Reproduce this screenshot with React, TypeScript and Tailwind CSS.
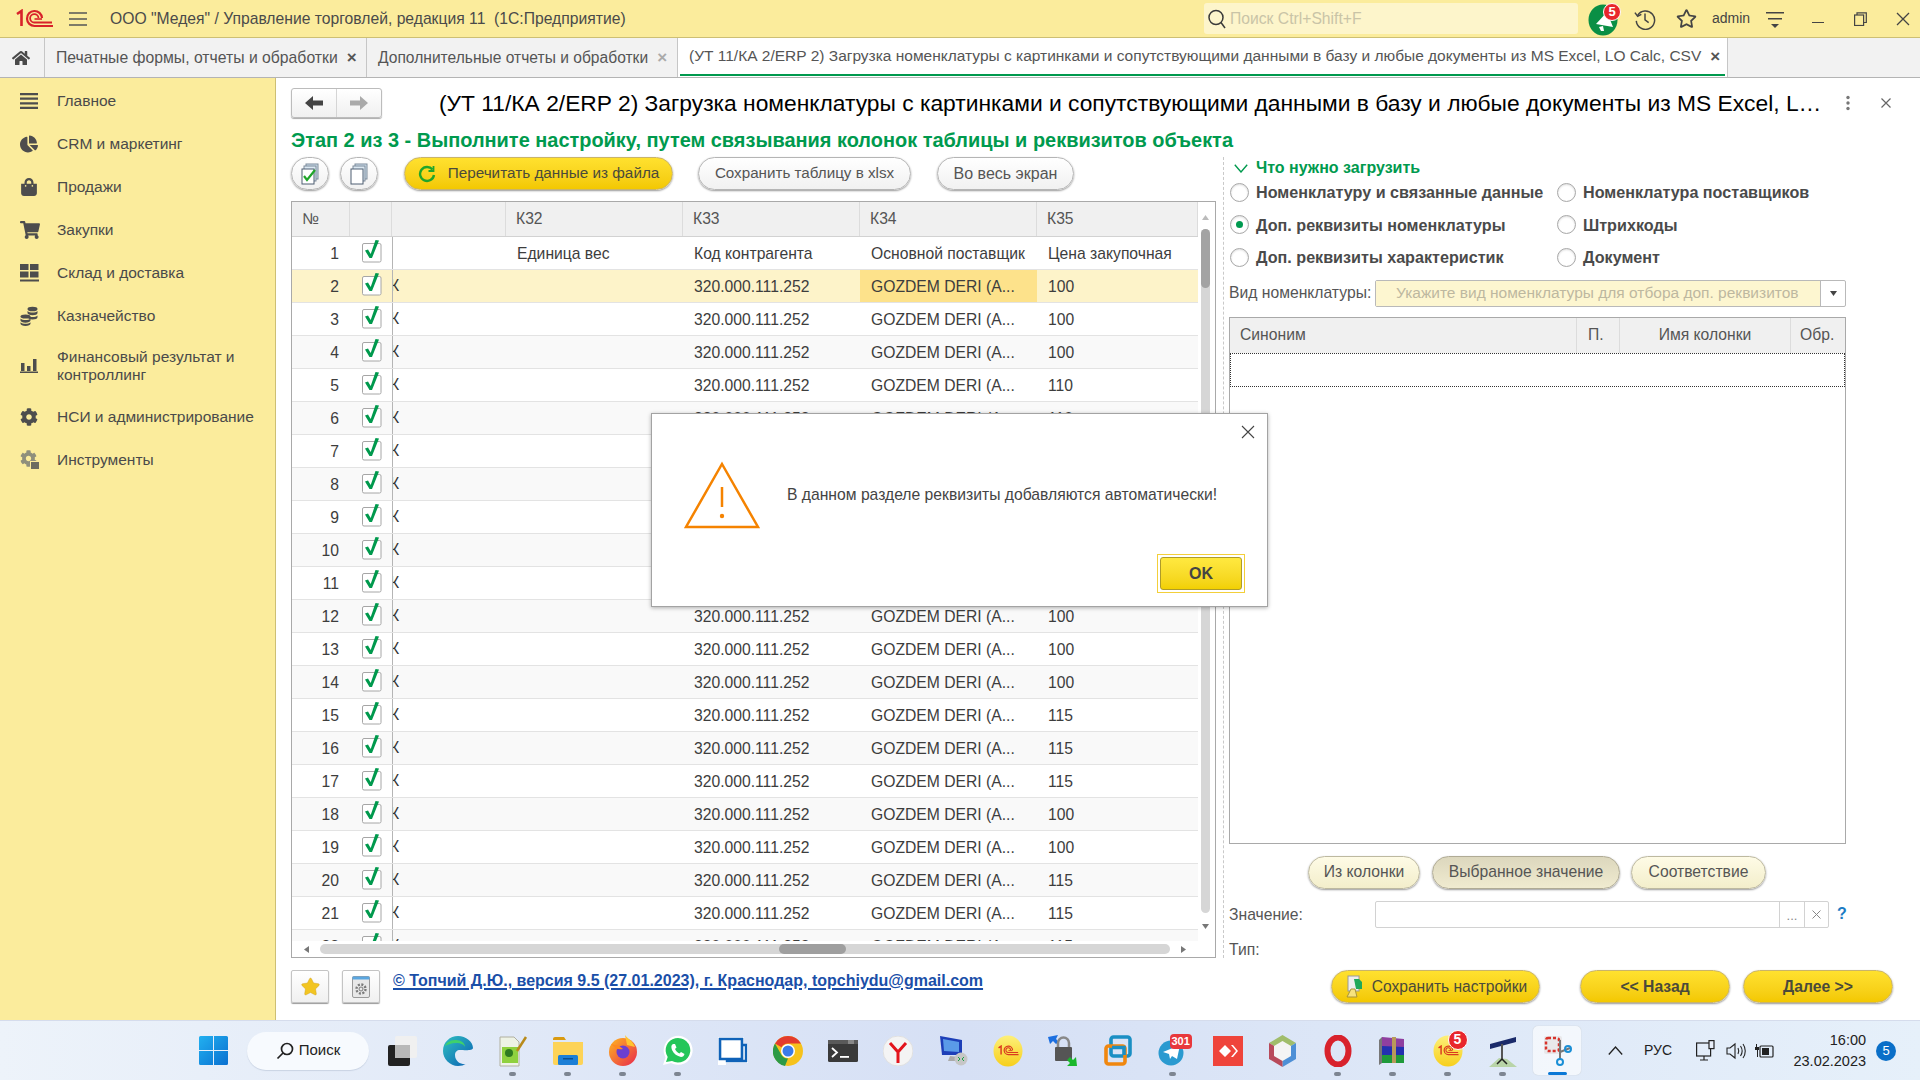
import React from "react";
import { FaChartPie, FaShoppingBag, FaShoppingCart, FaCog, FaHome, FaStar, FaRegStar } from "react-icons/fa";

const Logo1C = ({ w = 37, h = 20, color = "#d8222a" }: { w?: number; h?: number; color?: string }) => (
  <svg width={w} height={h} viewBox="0 0 37 20" fill="none">
    <path d="M1 5 L5.5 2 V17" stroke={color} strokeWidth="2.6" />
    <path d="M26 9 A7.5 7.5 0 1 0 18.5 17 H37" stroke={color} strokeWidth="2.2" />
    <path d="M22.5 9 A4.2 4.2 0 1 0 18.5 13.5 H36" stroke={color} strokeWidth="1.8" />
    <path d="M18.5 10 H26" stroke={color} strokeWidth="1.6" />
  </svg>
);

const MenuLines = () => (
  <svg width="18" height="14" viewBox="0 0 18 14" stroke="#555" strokeWidth="1.4">
    <path d="M0 1H18M0 7H18M0 13H18" />
  </svg>
);

const side: [React.ReactNode, string][] = [
  [<svg width="18" height="18" viewBox="0 0 18 18" fill="#4d4d4d"><path d="M0 1h18v2.2H0zM0 5.6h18v2.2H0zM0 10.2h18v2.2H0zM0 14.8h18V17H0z" /></svg>, "Главное"],
  [<FaChartPie size={18} color="#4d4d4d" />, "CRM и маркетинг"],
  [<FaShoppingBag size={18} color="#4d4d4d" />, "Продажи"],
  [<FaShoppingCart size={20} color="#4d4d4d" />, "Закупки"],
  [<svg width="19" height="18" viewBox="0 0 19 18" fill="#4d4d4d"><path d="M0 0h8.5v6H0zM10 0h8.5v6H10zM0 7.5h8.5v6H0zM10 7.5h8.5v6H10zM0 15.5h19V17.500H0z" /></svg>, "Склад и доставка"],
  [<svg width="18" height="20" viewBox="0 0 18 20" fill="#4d4d4d"><ellipse cx="12.500" cy="3" rx="5" ry="2.300" /><path d="M7.500 5v2c0 1.200 2.200 2.300 5 2.300s5-1 5-2.300V5c-1 1-3 1.500-5 1.500S8.500 6 7.500 5zM7.500 9.500v1.800c0 1.200 2.200 2.300 5 2.300s5-1 5-2.300V9.500c-1 1-3 1.500-5 1.500s-4-.5-5-1.500z" /><ellipse cx="5.500" cy="10.500" rx="5" ry="2.100" /><path d="M.5 12.500v2c0 1.200 2.200 2.200 5 2.200s5-1 5-2.200v-2c-1 1-3 1.500-5 1.500s-4-.5-5-1.500zM.5 16.200v1.500c0 1.200 2.200 2.200 5 2.200s5-1 5-2.200v-1.500c-1 1-3 1.500-5 1.500s-4-.5-5-1.500z" /></svg>, "Казначейство"],
  [<svg width="18" height="14" viewBox="0 0 18 14" fill="#4d4d4d"><path d="M1 4h3.500v8H1zM7 7h3.500v5H7zM13 0h3.500v12H13zM0 12.600h18V14H0z" /></svg>, "Финансовый результат и контроллинг"],
  [<FaCog size={18} color="#4d4d4d" />, "НСИ и администрирование"],
  [<span className="relative inline-block w-[20px] h-[20px]"><FaCog size={17} color="#8f8f7c" /><span className="absolute right-0 bottom-0 w-[10px] h-[9px] bg-[#6c6c60] border border-[#fbec9c]" /></span>, "Инструменты"],
];

const Check = () => (
  <svg width="21" height="24" viewBox="0 0 21 24" fill="none" className="-mt-[5px]">
    <rect x="1.500" y="4.500" width="18.500" height="18.500" rx="1.500" fill="#fff" stroke="#a6a6a6" />
    <path d="M4 11.500 L7 10.500 L9.700 15 L14.500 1 L18 1.500 L11 19 L8.500 19 Z" fill="#00994d" />
  </svg>
);

const vals: Record<number, string> = { 2: "100", 3: "100", 4: "100", 5: "110", 6: "110", 7: "110", 8: "110", 9: "110", 10: "110", 11: "110", 12: "100", 13: "100", 14: "100", 15: "115", 16: "115", 17: "115", 18: "100", 19: "100", 20: "115", 21: "115", 22: "115" };
const rows = Array.from({ length: 22 }, (_, i) => i + 1);

const Row = ({ n }: { n: number }) => {
  const sel = n === 2;
  const first = n === 1;
  return (
    <div className={`flex h-[33px] shrink-0 items-center border-b border-[#e3e3e3] text-[15.7px] text-[#3d3d3d] whitespace-nowrap ${sel ? "bg-[#fdf3c9]" : n % 2 === 0 ? "bg-[#f9f9f9]" : "bg-white"}`}>
      <div className="w-[58px] text-right pr-[11px] pt-[1px]">{n}</div>
      <div className="w-[42px] flex justify-center"><Check /></div>
      <div className="w-[114px] h-full border-l border-[#b5b5b5] overflow-hidden flex items-center">
        {!first && <span className="-ml-[3px] text-[#333]">К</span>}
      </div>
      <div className="w-[177px] pl-[11px] pt-[1px]">{first ? "Единица вес" : ""}</div>
      <div className="w-[177px] pl-[11px] pt-[1px]">{first ? "Код контрагента" : "320.000.111.252"}</div>
      <div className={`w-[177px] pl-[11px] pt-[1px] h-full flex items-center ${sel ? "bg-[#fde28b]" : ""}`}>{first ? "Основной поставщик" : "GOZDEM DERI (A..."}</div>
      <div className="w-[161px] pl-[11px] pt-[1px]">{first ? "Цена закупочная" : vals[n]}</div>
    </div>
  );
};

const Hd = ({ w, children }: { w: string; children?: React.ReactNode }) => (
  <div className={`${w} h-full flex items-center pl-[10px] bg-[#f0f0f0] border-r border-[#dcdcdc] text-[15.7px] text-[#555]`}>{children}</div>
);

const Radio = ({ on, label }: { on?: boolean; label: string }) => (
  <div className="flex items-center h-[32.500px]">
    <span className="w-[19px] h-[19px] rounded-full border border-[#a8a8a8] bg-white flex items-center justify-center shadow-[inset_0_1px_2px_#ddd]">
      {on && <span className="w-[7px] h-[7px] rounded-full bg-[#009a50]" />}
    </span>
    <span className="ml-[7px] text-[16.15px] font-bold text-[#4a4a4a] whitespace-nowrap">{label}</span>
  </div>
);

const Tb = ({ c, dot, active, children }: { c?: string; dot?: boolean; active?: boolean; children: React.ReactNode }) => (
  <div className={`relative w-[55px] h-[60px] flex items-center justify-center ${c ?? ""}`}>
    {active && <span className="absolute left-[3px] right-[4px] top-[5px] bottom-[6px] rounded-[5px] bg-white/60 shadow-[0_0_1px_#bbb]" />}
    <span className="relative flex items-center justify-center">{children}</span>
    {dot && <span className="absolute bottom-[5px] left-[24px] w-[7px] h-[4px] rounded-full bg-[#7d8591]" />}
    {active && <span className="absolute bottom-[6px] left-[18px] w-[19px] h-[3px] rounded-full bg-[#0a78d6]" />}
  </div>
);

const Coin1C = () => (
  <svg width="30" height="32" viewBox="0 0 30 32">
    <defs><linearGradient id="cg" x1="0" y1="0" x2="0" y2="1"><stop offset="0" stopColor="#fdf07a" /><stop offset="1" stopColor="#f7cf1c" /></linearGradient></defs>
    <ellipse cx="15" cy="16" rx="14.500" ry="15.500" fill="url(#cg)" />
    <g transform="translate(5 10) scale(.56)"><Logo1C color="#d93a1f" /></g>
  </svg>
);

const Btn = ({ cls, t = "text-[15.7px]", children }: { cls: string; t?: string; children: React.ReactNode }) => (
  <div className={`h-[33px] rounded-[17px] border flex items-center justify-center whitespace-nowrap shadow-[0_1px_2px_#999] ${t} ${cls}`}>{children}</div>
);
const yel = "bg-gradient-to-b from-[#ffe12e] to-[#f3c800] border-[#c9b46a] text-[#4a4a3a]";
const gry = "bg-gradient-to-b from-white to-[#f1f1f1] border-[#b5b5b5] text-[#555]";
const bei = "bg-gradient-to-b from-[#fefbe6] to-[#f3eecb] border-[#bdb9a0] text-[#555]";

export default function App() {
  return (
    <div className="w-[1920px] h-[1080px] relative overflow-hidden flex flex-col bg-white font-['Liberation_Sans',Arial,sans-serif]">
      {/* Title bar */}
      <div className="h-[38px] shrink-0 flex items-center bg-[#fbec9c] border-b border-[#cdbf74]">
        <div className="ml-[16px] w-[37px] flex"><Logo1C /></div>
        <div className="ml-[16px] flex"><MenuLines /></div>
        <div className="ml-[23px] w-[1094px] text-[15.7px] text-[#4a4a4a] whitespace-nowrap">ООО "Медея" / Управление торговлей, редакция 11&nbsp; (1С:Предприятие)</div>
        <div className="w-[374px] h-[31px] rounded-[3px] bg-[#fdf5cb] flex items-center pl-[3px]">
          <svg width="20" height="22" viewBox="0 0 20 22" fill="none" stroke="#3a3a3a" strokeWidth="1.500"><circle cx="9" cy="9.500" r="7" /><path d="M14 14.500L18 20" /></svg>
          <span className="ml-[3px] text-[15.7px] text-[#c9c4a7]">Поиск Ctrl+Shift+F</span>
        </div>
        <div className="relative ml-[9px] w-[34px] h-[34px] flex items-center justify-center">
          <svg width="32" height="34" viewBox="0 0 32 34">
            <ellipse cx="15" cy="18" rx="14.500" ry="15.500" fill="#0a8f45" />
            <path d="M8 22 L19 10 L25 25 Z" fill="#fff" /><path d="M11 25 L15 24 L16 29 L13 29 Z" fill="#fff" />
          </svg>
          <span className="absolute left-[16px] top-[1px] w-[18px] h-[18px] rounded-full bg-[#e8262c] border border-white text-white text-[13px] font-bold flex items-center justify-center">5</span>
        </div>
        <svg className="ml-[13px]" width="22" height="22" viewBox="0 0 24 24" fill="none" stroke="#444" strokeWidth="1.600"><path d="M4 8a10 10 0 1 1-1.500 6" /><path d="M1 5l3 4 4-2" /><path d="M12 6v7l4 3" /></svg>
        <span className="ml-[20px] flex"><FaRegStar size={21} color="#444" /></span>
        <span className="ml-[15px] text-[14px] text-[#444]">admin</span>
        <svg className="ml-[15px]" width="20" height="18" viewBox="0 0 20 18" fill="#444"><path d="M1 2h18v1.400H1zM3 8h14v1.400H3zM6 14h8l-4 4z" /></svg>
        <span className="ml-[27px] w-[12px] h-[1.500px] mt-[8px] bg-[#444]" />
        <svg className="ml-[30px]" width="13" height="14" viewBox="0 0 13 14" fill="none" stroke="#444" strokeWidth="1.200"><rect x=".6" y="3" width="9" height="10.500" /><path d="M3 3V.8h9.300V10.500H9.600" /></svg>
        <svg className="ml-[29px]" width="14" height="14" viewBox="0 0 14 14" stroke="#444" strokeWidth="1.300"><path d="M1 1L13 13M13 1L1 13" /></svg>
      </div>

      {/* Tabs */}
      <div className="h-[40px] shrink-0 flex bg-[#f2f2f2] border-b border-[#b4b4b4] text-[#555]">
        <div className="w-[45px] border-r border-[#c6c6c6] flex items-center justify-center pr-[3px]"><FaHome size={18} color="#4a4a4a" /></div>
        <div className="w-[322px] border-r border-[#c6c6c6] flex items-center pl-[11px] whitespace-nowrap text-[15.75px]">
          Печатные формы, отчеты и обработки<span className="ml-[9px] text-[17px] font-bold text-[#555] leading-none">×</span>
        </div>
        <div className="w-[311px] border-r border-[#c6c6c6] flex items-center pl-[11px] whitespace-nowrap text-[15.6px]">
          Дополнительные отчеты и обработки<span className="ml-[9px] text-[17px] font-bold text-[#aaa] leading-none">×</span>
        </div>
        <div className="w-[1050px] bg-white border-r border-[#c6c6c6] px-[2px] flex">
          <div className="flex-1 flex items-center pl-[9px] border-b-[2.500px] border-[#00994d] mb-[1px] whitespace-nowrap text-[15.5px]">
            (УТ 11/КА 2/ERP 2) Загрузка номенклатуры с картинками и сопутствующими данными в базу и любые документы из MS Excel, LO Calc, CSV
            <span className="ml-[9px] text-[17px] font-bold text-[#555] leading-none">×</span>
          </div>
        </div>
      </div>

      <div className="flex-1 min-h-0 flex">
        {/* Sidebar */}
        <div className="w-[276px] shrink-0 bg-[#fbec9c] border-r border-[#cdbf74] pt-[1px] text-[15.5px] text-[#4a4a4a]">
          {side.map(([ic, t], i) => (
            <div key={i} className={`flex items-center ${i === 6 ? "h-[58px]" : "h-[43px]"}`}>
              <div className="w-[57px] pl-[20px] flex items-center">{ic}</div>
              <div className="w-[215px] leading-[18px]">{t}</div>
            </div>
          ))}
        </div>

        {/* Main */}
        <div className="flex-1 min-w-0 flex flex-col pl-[15px]">
          <div className="flex items-center h-[30px] mt-[10px]">
            <div className="w-[91px] h-[30px] flex rounded-[3px] border border-[#bcbcbc] bg-gradient-to-b from-white to-[#f0f0f0] shadow-[0_1px_1px_#aaa]">
              <div className="w-[45px] border-r border-[#d5d5d5] flex items-center justify-center">
                <svg width="18" height="14" viewBox="0 0 18 14" fill="#444"><path d="M0 7L8 0V4.500H18V9.500H8V14Z" /></svg>
              </div>
              <div className="flex-1 flex items-center justify-center">
                <svg width="18" height="14" viewBox="0 0 18 14" fill="#aaa"><path d="M18 7L10 0V4.500H0V9.500H10V14Z" /></svg>
              </div>
            </div>
            <div className="ml-[57px] w-[1386px] truncate text-[22.8px] text-black">
              (УТ 11/КА 2/ERP 2) Загрузка номенклатуры с картинками и сопутствующими данными в базу и любые документы из MS Excel, LO Calc, CSV
            </div>
            <svg className="ml-[20px]" width="6" height="16" viewBox="0 0 6 16" fill="#777"><circle cx="3" cy="2.500" r="1.700" /><circle cx="3" cy="8" r="1.700" /><circle cx="3" cy="13.500" r="1.700" /></svg>
            <svg className="ml-[30px]" width="10" height="10" viewBox="0 0 10 10" stroke="#666" strokeWidth="1.200"><path d="M.5.5L9.500 9.500M9.500.5L.5 9.500" /></svg>
          </div>
          <div className="h-[23px] mt-[11px] mb-[5px] flex items-center text-[19.95px] font-bold text-[#009a4e] whitespace-nowrap">
            Этап 2 из 3 - Выполните настройку, путем связывания колонок таблицы и реквизитов объекта
          </div>

          <div className="flex">
            {/* Left column */}
            <div className="w-[925px] shrink-0 flex flex-col h-[801px]">
              <div className="flex items-center h-[33px] shrink-0">
                <div className="w-[38px] h-[33px] rounded-full border border-[#b5b5b5] bg-gradient-to-b from-white to-[#f1f1f1] shadow-[0_1px_2px_#999] flex items-center justify-center">
                  <svg width="18" height="22" viewBox="0 0 18 22"><rect x="5" y="1" width="12" height="15" fill="#cfe1ee" stroke="#7c8a99" /><rect x="3" y="3" width="12" height="15" fill="#dbe8f2" stroke="#7c8a99" /><rect x="1" y="6" width="12" height="15" fill="#fff" stroke="#4e5f72" /><path d="M3 13l3 4 8-10" fill="none" stroke="#1fa52a" strokeWidth="2.200" /></svg>
                </div>
                <div className="ml-[11px] w-[38px] h-[33px] rounded-full border border-[#b5b5b5] bg-gradient-to-b from-white to-[#f1f1f1] shadow-[0_1px_2px_#999] flex items-center justify-center">
                  <svg width="18" height="22" viewBox="0 0 18 22"><rect x="5" y="1" width="12" height="15" fill="#cfe1ee" stroke="#7c8a99" /><rect x="3" y="3" width="12" height="15" fill="#dbe8f2" stroke="#7c8a99" /><rect x="1" y="6" width="12" height="15" fill="#fff" stroke="#4e5f72" /></svg>
                </div>
                <Btn t="text-[15.3px]" cls={`ml-[26px] w-[269px] ${yel}`}>
                  <svg width="18" height="18" viewBox="0 0 18 18" fill="none" stroke="#1fa52a" strokeWidth="2.400" className="mr-[12px]"><path d="M14.500 4.500A7 7 0 1 0 16 10" /><path d="M15.500 1v5h-5" strokeWidth="1.800" /></svg>
                  Перечитать данные из файла
                </Btn>
                <Btn t="text-[15.2px]" cls={`ml-[25px] w-[213px] ${gry}`}>Сохранить таблицу в xlsx</Btn>
                <Btn t="text-[16px]" cls={`ml-[26px] w-[137px] ${gry}`}>Во весь экран</Btn>
              </div>

              {/* Table */}
              <div className="mt-[11px] flex-1 min-h-0 flex flex-col border border-[#a9a9a9] bg-white">
                <div className="flex-1 min-h-0 flex">
                  <div className="w-[906px] flex flex-col">
                    <div className="h-[35px] shrink-0 flex border-b border-[#d2d2d2]">
                      <Hd w="w-[58px]">№</Hd>
                      <Hd w="w-[42px]" />
                      <Hd w="w-[114px]" />
                      <Hd w="w-[177px]">К32</Hd>
                      <Hd w="w-[177px]">К33</Hd>
                      <Hd w="w-[177px]">К34</Hd>
                      <Hd w="w-[161px]">К35</Hd>
                    </div>
                    <div className="flex-1 min-h-0 overflow-hidden">
                      {rows.map((n) => <Row key={n} n={n} />)}
                    </div>
                  </div>
                  <div className="w-[17px] flex flex-col items-center pr-[2px]">
                    <svg className="mt-[13px]" width="7" height="5" viewBox="0 0 7 5" fill="#bbb"><path d="M3.500 0L7 5H0Z" /></svg>
                    <div className="mt-[9px] w-[9px] h-[684px] rounded-[5px] bg-[#d6d6d6]">
                      <div className="w-[9px] h-[59px] rounded-[5px] bg-[#a3a3a3]" />
                    </div>
                    <svg className="mt-[11px]" width="7" height="5" viewBox="0 0 7 5" fill="#777"><path d="M3.500 5L7 0H0Z" /></svg>
                  </div>
                </div>
                <div className="h-[16px] shrink-0 flex items-center">
                  <svg className="ml-[12px]" width="5" height="7" viewBox="0 0 5 7" fill="#777"><path d="M0 3.500L5 0V7Z" /></svg>
                  <div className="ml-[11px] w-[850px] h-[10px] rounded-[5px] bg-[#d6d6d6] flex">
                    <div className="ml-[459px] w-[67px] h-[10px] rounded-[5px] bg-[#9f9f9f]" />
                  </div>
                  <svg className="ml-[11px]" width="5" height="7" viewBox="0 0 5 7" fill="#777"><path d="M5 3.500L0 0V7Z" /></svg>
                </div>
              </div>
            </div>

            {/* Right column */}
            <div className="ml-[7px] w-[697px] h-[801px] border-l border-dashed border-[#c9c9c9] pl-[5px] flex flex-col">
              <div className="h-[22px] shrink-0 flex items-center pl-[5px] text-[16px] font-bold text-[#009a4e]">
                <svg width="14" height="9" viewBox="0 0 14 9" fill="none" stroke="#009a4e" strokeWidth="1.400"><path d="M.8.8L7 8L13.200.8" /></svg>
                <span className="ml-[8px]">Что нужно загрузить</span>
              </div>
              <div className="grid grid-cols-[327px_1fr] pl-[1px] -mt-[3px] shrink-0">
                <Radio label="Номенклатуру и связанные данные" />
                <Radio label="Номенклатура поставщиков" />
                <Radio on label="Доп. реквизиты номенклатуры" />
                <Radio label="Штрихкоды" />
                <Radio label="Доп. реквизиты характеристик" />
                <Radio label="Документ" />
              </div>
              <div className="mt-[6px] flex items-center h-[27px] shrink-0">
                <div className="w-[146px] text-[15.7px] text-[#555] whitespace-nowrap">Вид номенклатуры:</div>
                <div className="w-[471px] h-[27px] flex rounded-[2px] border border-[#b9b9b9]">
                  <div className="w-[444px] h-full bg-[#fdf6d0] flex items-center pl-[20px] text-[15.5px] text-[#bdb8a0] whitespace-nowrap overflow-hidden">Укажите вид номенклатуры для отбора доп. реквизитов</div>
                  <div className="flex-1 border-l border-[#b9b9b9] flex items-center justify-center">
                    <svg width="7" height="5" viewBox="0 0 7 5" fill="#444"><path d="M0 0H7L3.500 5Z" /></svg>
                  </div>
                </div>
              </div>
              <div className="mt-[10px] w-[617px] h-[527px] shrink-0 border border-[#a9a9a9] flex flex-col">
                <div className="h-[35px] shrink-0 flex bg-[#f0f0f0] text-[15.7px] text-[#555]">
                  <div className="w-[347px] pl-[10px] flex items-center border-r border-[#dcdcdc]">Синоним</div>
                  <div className="w-[43px] pl-[11px] flex items-center border-r border-[#dcdcdc]">П.</div>
                  <div className="w-[171px] flex items-center justify-center border-r border-[#dcdcdc]">Имя колонки</div>
                  <div className="flex-1 pl-[9px] flex items-center">Обр.</div>
                </div>
                <div className="h-[34px] shrink-0 border border-dotted border-[#333]" />
              </div>
              <div className="mt-[12px] flex pl-[79px] shrink-0">
                <Btn cls={`w-[112px] ${bei}`}>Из колонки</Btn>
                <Btn cls="ml-[12px] w-[188px] bg-gradient-to-b from-[#dcd7bd] to-[#f0ebd0] border-[#b0ab95] text-[#555]">Выбранное значение</Btn>
                <Btn cls={`ml-[11px] w-[135px] ${bei}`}>Соответствие</Btn>
              </div>
              <div className="mt-[12px] flex items-center h-[27px] shrink-0">
                <div className="w-[146px] text-[15.7px] text-[#555] pt-[2px]">Значение:</div>
                <div className="w-[454px] h-[27px] flex rounded-[2px] border border-[#d2d2d2]">
                  <div className="w-[403px]" />
                  <div className="w-[25px] border-l border-[#d2d2d2] text-[13px] text-[#888] flex items-center justify-center pt-[4px]">...</div>
                  <div className="flex-1 border-l border-[#d2d2d2] flex items-center justify-center">
                    <svg width="9" height="9" viewBox="0 0 9 9" stroke="#888" strokeWidth="1"><path d="M.5.5L8.500 8.500M8.500.5L.5 8.500" /></svg>
                  </div>
                </div>
                <div className="ml-[8px] text-[16px] font-bold text-[#1c7cc4]">?</div>
              </div>
              <div className="mt-[10px] text-[15.7px] text-[#555]">Тип:</div>
            </div>
          </div>

          {/* Bottom row */}
          <div className="mt-[12px] flex items-center h-[33px]">
            <div className="w-[38px] h-[33px] rounded-[2px] border border-[#c4c4c4] bg-gradient-to-b from-white to-[#f0f0f0] shadow-[0_1px_1px_#999] flex items-center justify-center">
              <FaStar size={19} color="#f2c522" stroke="#c99a17" strokeWidth={12} />
            </div>
            <div className="ml-[13px] w-[38px] h-[33px] rounded-[2px] border border-[#c4c4c4] bg-gradient-to-b from-white to-[#f0f0f0] shadow-[0_1px_1px_#999] flex items-center justify-center">
              <svg width="18" height="22" viewBox="0 0 18 22"><rect x=".5" y=".5" width="17" height="21" rx="1.500" fill="#e8e8e8" stroke="#9a9a9a" /><rect x=".5" y=".5" width="17" height="3" fill="#5aa6e0" /><circle cx="9" cy="13" r="4.500" fill="none" stroke="#7a7a7a" strokeWidth="2.400" strokeDasharray="2 1.500" /><circle cx="9" cy="13" r="2" fill="none" stroke="#7a7a7a" /></svg>
            </div>
            <a className="ml-[13px] w-[588px] text-[16px] font-bold text-[#1a4fa8] underline decoration-[2px] underline-offset-[2px] whitespace-nowrap -mt-[12px]">© Топчий Д.Ю., версия 9.5 (27.01.2023), г. Краснодар, topchiydu@gmail.com</a>
            <Btn t="text-[15.6px]" cls={`ml-[350px] w-[209px] ${yel}`}>
              <svg width="20" height="24" viewBox="0 0 20 24" className="mr-[8px]"><rect x="4" y="1" width="11" height="15" fill="#eee" stroke="#999" /><path d="M10 4h5l3 3v7h-6z" fill="#1fa85a" /><path d="M7 14l-4 8h10l-2-8z" fill="#f6e27e" stroke="#a8933a" /></svg>
              Сохранить настройки
            </Btn>
            <Btn cls={`ml-[40px] w-[150px] font-bold ${yel}`}>&lt;&lt; Назад</Btn>
            <Btn cls={`ml-[13px] w-[150px] font-bold ${yel}`}>Далее &gt;&gt;</Btn>
          </div>
        </div>
      </div>

      {/* Taskbar */}
      <div className="h-[60px] shrink-0 flex items-center pl-[199px] bg-gradient-to-r from-[#edf3fa] via-[#d6e0f5] to-[#e6f0fa] border-t border-[#d5dcec]">
        <svg width="29" height="29" viewBox="0 0 29 29"><defs><linearGradient id="wn" x1="0" y1="0" x2="1" y2="1"><stop offset="0" stopColor="#22b0f0" /><stop offset="1" stopColor="#0a70d0" /></linearGradient></defs><path d="M0 1.500A1.500 1.500 0 0 1 1.500 0H14V14H0zM15 0h12.500A1.500 1.500 0 0 1 29 1.500V14H15zM0 15H14V29H1.500A1.500 1.500 0 0 1 0 27.500zM15 15H29V27.500A1.500 1.500 0 0 1 27.500 29H15z" fill="url(#wn)" /></svg>
        <div className="ml-[19px] w-[122px] h-[38px] rounded-[19px] bg-[#f7fafe] shadow-[0_1px_1px_#c9d3e3] flex items-center justify-center text-[15px] text-[#222]">
          <svg width="18" height="18" viewBox="0 0 18 18" fill="none" stroke="#222" strokeWidth="1.700"><circle cx="11" cy="7" r="5.500" /><path d="M7 11L1.500 16.500" /></svg>
          <span className="ml-[5px]">Поиск</span>
        </div>
        <div className="ml-[6px] flex">
          <Tb><svg width="31" height="30" viewBox="0 0 31 30"><rect x="1" y="9" width="22" height="21" rx="2" fill="#222" /><rect x="8" y="0" width="22" height="22" rx="2" fill="#f0f0f0" /><rect x="8" y="9" width="15" height="13" fill="#b8b8b8" /></svg></Tb>
          <Tb><svg width="30" height="30" viewBox="0 0 30 30"><defs><linearGradient id="ed" x1="0" y1="0" x2="1" y2="1"><stop offset="0" stopColor="#2fc0c0" /><stop offset="1" stopColor="#0a5fb4" /></linearGradient></defs><path d="M15 0C7 0 0 6 0 15c0 8 7 15 15 15 3 0 6-1 8-2-4 1-11-2-11-9 0-3 2-5 5-5 4 0 13 1 13-2C30 6 23 0 15 0z" fill="url(#ed)" /><path d="M2 10c2-5 7-6 11-6 5 0 9 3 9 7-1-2-4-4-9-4-5 0-9 2-11 3z" fill="#3fd06c" /></svg></Tb>
          <Tb dot><svg width="30" height="32" viewBox="0 0 30 32"><path d="M2 2h14l5 5v24H2z" fill="#eef3e6" stroke="#b0b0a0" /><rect x="4" y="12" width="16" height="16" fill="#8fd13f" /><circle cx="11" cy="18" r="4" fill="#2e7a20" /><path d="M19 16L28 2" stroke="#b88a1a" strokeWidth="2.500" /></svg></Tb>
          <Tb dot><svg width="30" height="28" viewBox="0 0 30 28"><path d="M0 2a2 2 0 0 1 2-2h9l2 3H0z" fill="#d99a10" /><path d="M0 5h30v21a2 2 0 0 1-2 2H2a2 2 0 0 1-2-2z" fill="#fdd357" /><rect x="5" y="18" width="20" height="10" rx="1.500" fill="#1c7fd6" /><rect x="10" y="21" width="10" height="1.500" fill="#0a4f90" /></svg></Tb>
          <Tb dot><svg width="30" height="31" viewBox="0 0 30 31"><defs><linearGradient id="ff" x1="0" y1="0" x2="1" y2="1"><stop offset="0" stopColor="#ffb81f" /><stop offset="1" stopColor="#e8274e" /></linearGradient></defs><circle cx="15" cy="17" r="14" fill="url(#ff)" /><path d="M17 0c3 4 8 6 10 12l-8-2z" fill="#ffc52e" /><circle cx="15" cy="17" r="6.500" fill="#6b3fd0" /><path d="M3 9c4 1 8 1 12 5-4 1-7 0-12-5z" fill="#ff8a1f" /></svg></Tb>
          <Tb dot><svg width="31" height="31" viewBox="0 0 31 31"><path d="M1 30l2.500-7.500A14.500 14.500 0 1 1 9 28z" fill="#fff" /><path d="M4 27l1.700-5A12.300 12.300 0 1 1 10 26z" fill="#25c65a" /><path d="M11 9c-2 1-2 3-1 6 2 4 5 6 9 7 2 0 3-1 3.500-3l-3.500-2-1.500 1.500c-2-1-3.500-2.500-4.500-4.500l1.500-1.500-1.500-3.500z" fill="#fff" /></svg></Tb>
          <Tb><svg width="30" height="28" viewBox="0 0 30 28"><path d="M0 0h26v7h4v19H8v2H0z" fill="#fff" /><path d="M2 2h22v20H2z" fill="#fff" stroke="#0f62b8" strokeWidth="2.600" /><path d="M25 8h3v16H9v-1" fill="none" stroke="#0f62b8" strokeWidth="2.400" /></svg></Tb>
          <Tb><svg width="30" height="30" viewBox="0 0 30 30"><circle cx="15" cy="15" r="15" fill="#f6c21c" /><path d="M15 0A15 15 0 0 1 28 7.500H15A7.500 7.500 0 0 0 8.500 11.200L2 7.500A15 15 0 0 1 15 0Z" fill="#e33b2e" /><path d="M2 7.500L8.500 19A7.500 7.500 0 0 0 15 22.500L12 30A15 15 0 0 1 2 7.500Z" fill="#2c9a46" /><circle cx="15" cy="15" r="7" fill="#fff" /><circle cx="15" cy="15" r="5.500" fill="#3a7be8" /></svg></Tb>
          <Tb><svg width="30" height="22" viewBox="0 0 30 22"><rect width="30" height="22" rx="1.500" fill="#3a3a3a" /><rect width="30" height="4" fill="#5a5a5a" /><rect x="20" width="6" height="4" fill="#888" /><path d="M4 8l5 4.500L4 17" fill="none" stroke="#fff" strokeWidth="1.800" /><rect x="12" y="16" width="9" height="1.800" fill="#fff" /></svg></Tb>
          <Tb><svg width="30" height="30" viewBox="0 0 30 30"><circle cx="15" cy="15" r="15" fill="#f4f4f4" stroke="#e0e0e0" /><path d="M7 7l8 9 8-9M15 16v11" fill="none" stroke="#e3141c" strokeWidth="3" /></svg></Tb>
          <Tb><svg width="30" height="31" viewBox="0 0 30 31"><path d="M2 1l22 4v15L4 20z" fill="#1d3fb8" /><path d="M5 4l16 3v10L6 16z" fill="#5a9be8" /><path d="M12 21l8 1v4H10z" fill="#aaa" /><circle cx="23" cy="24" r="6.500" fill="#c6c6c6" /><path d="M20 22l2 2-2 2M26 22l-2 2 2 2" stroke="#1aa04a" fill="none" /></svg></Tb>
          <Tb><Coin1C /></Tb>
          <Tb><svg width="30" height="32" viewBox="0 0 30 32"><path d="M0 2l10-2-2 4 3 3-3 2-3-3-3 3z" fill="#1c6fe0" /><rect x="7" y="12" width="17" height="14" rx="1" fill="#555" /><path d="M10 12V8a5.500 5.500 0 0 1 11 0v4" fill="none" stroke="#888" strokeWidth="2.500" /><path d="M29 31l-10 0 3-3-3-3 3-3 3 3 3-3z" fill="#1ab82c" /></svg></Tb>
          <Tb><svg width="28" height="31" viewBox="0 0 28 31" fill="none"><rect x="7" y="2" width="19" height="19" rx="2.500" stroke="#1a8fc4" strokeWidth="3.600" /><rect x="2" y="11" width="19" height="18" rx="2.500" stroke="#f0870f" strokeWidth="3.600" /><path d="M8 12.500h12v7.500" stroke="#1a8fc4" strokeWidth="3.600" /></svg></Tb>
          <Tb dot>
            <svg width="30" height="30" viewBox="0 0 30 30"><circle cx="13" cy="17" r="12.500" fill="#2a9ad0" /><path d="M5 16l17-7-3 14-5-3-2 3-1-5z" fill="#fff" /></svg>
            <span className="absolute left-[12px] top-[-2px] px-[2px] h-[15px] rounded-[4px] bg-[#e8383c] text-white text-[11px] leading-[15px] font-bold">301</span>
          </Tb>
          <Tb><div className="w-[30px] h-[30px] bg-[#ef443b] flex items-center justify-center"><svg width="20" height="14" viewBox="0 0 20 14" fill="#fff"><path d="M7 1l6 6-6 6-6-6zM13 1h2l5 6-5 6h-2l5-6z" /></svg></div></Tb>
          <Tb><svg width="27" height="32" viewBox="0 0 27 32"><path d="M13.500 0L27 8 13.500 16 0 8z" fill="#a0bd6b" /><path d="M27 8v16l-13.500 8V16z" fill="#4d8fd6" /><path d="M0 8v16l13.500 8V16z" fill="#b84a5a" /><path d="M13.500 6L22 11v10l-8.500 5L5 21V11z" fill="#f4f4f4" /></svg></Tb>
          <Tb dot><svg width="28" height="32" viewBox="0 0 28 32"><ellipse cx="14" cy="16" rx="10.500" ry="13.500" fill="none" stroke="#d8222c" strokeWidth="6" /></svg></Tb>
          <Tb dot><svg width="28" height="28" viewBox="0 0 28 28"><path d="M3 0l22 2v8H3z" fill="#8f3f9f" /><path d="M3 9l22 1v8H3z" fill="#2330b0" /><path d="M3 18l22 0v8H3z" fill="#1f9a3a" /><path d="M0 3l3-3v26l-3 2z" fill="#777" /><rect x="13" y="0" width="4" height="26" fill="#b89a5a" /></svg></Tb>
          <Tb dot><Coin1C /><span className="absolute left-[15px] top-[-5px] w-[20px] h-[20px] rounded-full bg-[#e8262c] border border-white text-white text-[14px] font-bold flex items-center justify-center">5</span></Tb>
          <Tb dot><svg width="28" height="32" viewBox="0 0 28 32"><path d="M0 32l10-9 8 1 10 8z" fill="#b8d4a8" /><path d="M1 9l26-7 0 5-26 7z" fill="#1a2a6a" /><rect x="12" y="9" width="2" height="16" fill="#555" /><path d="M13 24l-5 5M13 24l5 5" stroke="#222" strokeWidth="1.500" /></svg></Tb>
          <Tb active><svg width="28" height="30" viewBox="0 0 28 30" fill="none"><rect x="0" y="0" width="18" height="18" rx="2" fill="#e8e8ea" /><rect x="2" y="2" width="13" height="13" rx="2" stroke="#d8332c" strokeWidth="2.500" strokeDasharray="3 2" /><path d="M16 4v20M16 16l10-4" stroke="#777" strokeWidth="2" /><circle cx="16" cy="26" r="3" stroke="#1a8fd6" strokeWidth="2" /><circle cx="24" cy="13" r="3" stroke="#1a8fd6" strokeWidth="2" /></svg></Tb>
        </div>
        <svg className="ml-[23px]" width="15" height="9" viewBox="0 0 15 9" fill="none" stroke="#222" strokeWidth="1.300"><path d="M.8 8.500L7.500 1l6.700 7.500" /></svg>
        <span className="ml-[21px] text-[14px] text-[#222]">РУС</span>
        <svg className="ml-[24px]" width="20" height="22" viewBox="0 0 20 22" fill="none" stroke="#222" strokeWidth="1.200"><rect x=".6" y="3" width="14" height="13" /><path d="M4 20h8M8 16v4" /><rect x="13" y=".6" width="5" height="8" fill="#e8eef9" /></svg>
        <svg className="ml-[10px]" width="20" height="18" viewBox="0 0 20 18" fill="none" stroke="#222" strokeWidth="1.100"><path d="M1 6h3l5-4v14l-5-4H1zM12 6c1 2 1 4 0 6M14.500 4c2 3 2 7 0 10M17 2c3 4 3 10 0 14" /></svg>
        <svg className="ml-[8px]" width="20" height="18" viewBox="0 0 20 18" fill="#222"><rect x="6" y="4" width="13" height="11" rx="1" fill="none" stroke="#222" strokeWidth="1.200" /><rect x="8" y="6" width="7" height="7" /><path d="M1 5h4v3H1zM2 2h1v3H2zM3 8h1v7H3z" /></svg>
        <div className="ml-[2px] w-[90px] text-right text-[14.500px] text-[#222] leading-[21px]">
          <div>16:00</div>
          <div>23.02.2023</div>
        </div>
        <span className="ml-[10px] w-[20px] h-[20px] rounded-full bg-[#0a6fc8] text-white text-[13px] flex items-center justify-center">5</span>
      </div>

      {/* Dialog */}
      <div className="absolute left-[651px] top-[413px] w-[617px] h-[194px] bg-white border border-[#a3a3a3] shadow-[0_1px_4px_rgba(0,0,0,0.3)] flex flex-col">
        <div className="h-[25px] shrink-0 flex justify-end items-end pr-[12px]">
          <svg width="14" height="14" viewBox="0 0 14 14" stroke="#444" strokeWidth="1.100"><path d="M1 1L13 13M13 1L1 13" /></svg>
        </div>
        <div className="flex items-center h-[112px] shrink-0 pl-[32px]">
          <svg width="76" height="68" viewBox="0 0 76 68" fill="none" stroke="#f58300"><path d="M38 3L74 66H2Z" strokeWidth="2.500" /><path d="M38 26V46" strokeWidth="2.500" /><circle cx="38" cy="55" r="2.200" fill="#f58300" stroke="none" /></svg>
          <div className="ml-[27px] text-[15.7px] text-[#444] whitespace-nowrap">В данном разделе реквизиты добавляются автоматически!</div>
        </div>
        <div className="flex-1 flex justify-end pr-[22px] pt-[3px]">
          <div className="h-[39px] w-[88px] border border-[#f3cf3a] p-[2px]">
            <div className="h-[33px] rounded-[3px] border border-[#ae9b2a] bg-gradient-to-b from-[#ffe93f] to-[#f2d000] flex items-center justify-center text-[16px] font-bold text-[#444]">OK</div>
          </div>
        </div>
      </div>
    </div>
  );
}
